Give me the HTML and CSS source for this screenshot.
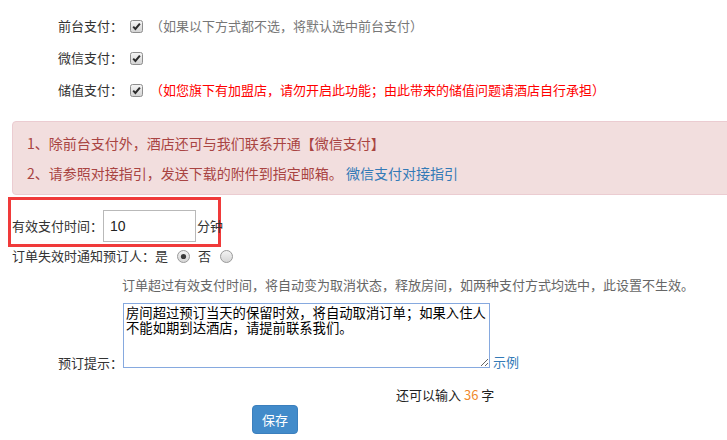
FILE: index.html
```html
<!DOCTYPE html>
<html lang="zh-CN">
<head>
<meta charset="utf-8">
<title>支付设置</title>
<link rel="stylesheet" href="styles.css">
</head>
<body>
<div class="page">
  <div class="pay-opts">
    <div class="opt-row">
      <span class="lbl">前台支付：</span>
      <svg class="cb" width="13" height="13" viewBox="0 0 13 13"><defs><linearGradient id="cbg1" x1="0" y1="0" x2="0" y2="1"><stop offset="0" stop-color="#f6f6f6"/><stop offset="1" stop-color="#d2d2d2"/></linearGradient></defs><rect x="0.5" y="0.5" width="12" height="12" rx="2" fill="url(#cbg1)" stroke="#8e8e8e"/><path d="M3.2 6.6 L5.4 8.9 L9.9 3.6" fill="none" stroke="#2b2b2b" stroke-width="2"/></svg>
      <span class="hint">（如果以下方式都不选，将默认选中前台支付）</span>
    </div>
    <div class="opt-row">
      <span class="lbl">微信支付：</span>
      <svg class="cb" width="13" height="13" viewBox="0 0 13 13"><defs><linearGradient id="cbg2" x1="0" y1="0" x2="0" y2="1"><stop offset="0" stop-color="#f6f6f6"/><stop offset="1" stop-color="#d2d2d2"/></linearGradient></defs><rect x="0.5" y="0.5" width="12" height="12" rx="2" fill="url(#cbg2)" stroke="#8e8e8e"/><path d="M3.2 6.6 L5.4 8.9 L9.9 3.6" fill="none" stroke="#2b2b2b" stroke-width="2"/></svg>
    </div>
    <div class="opt-row">
      <span class="lbl">储值支付：</span>
      <svg class="cb" width="13" height="13" viewBox="0 0 13 13"><defs><linearGradient id="cbg3" x1="0" y1="0" x2="0" y2="1"><stop offset="0" stop-color="#f6f6f6"/><stop offset="1" stop-color="#d2d2d2"/></linearGradient></defs><rect x="0.5" y="0.5" width="12" height="12" rx="2" fill="url(#cbg3)" stroke="#8e8e8e"/><path d="M3.2 6.6 L5.4 8.9 L9.9 3.6" fill="none" stroke="#2b2b2b" stroke-width="2"/></svg>
      <span class="warn">（如您旗下有加盟店，请勿开启此功能；由此带来的储值问题请酒店自行承担）</span>
    </div>
  </div>

  <div class="alert">
    <p>1、除前台支付外，酒店还可与我们联系开通【微信支付】</p>
    <p>2、请参照对接指引，发送下载的附件到指定邮箱。 <a class="alert-link" href="#">微信支付对接指引</a></p>
  </div>

  <div class="pay-time">
    <span class="pt-lbl">有效支付时间：</span><input class="pt-input" type="text" value="10"><span class="pt-unit">分钟</span>
  </div>

  <div class="notify">
    <span>订单失效时通知预订人：是</span>
    <svg class="radio r1" width="13" height="13" viewBox="0 0 13 13"><defs><linearGradient id="rg1" x1="0" y1="0" x2="0" y2="1"><stop offset="0" stop-color="#f4f4f4"/><stop offset="1" stop-color="#d4d4d4"/></linearGradient></defs><circle cx="6.5" cy="6.5" r="6" fill="url(#rg1)" stroke="#9a9a9a"/><circle cx="6.5" cy="6.5" r="2.6" fill="#3a3a3a"/></svg>
    <span class="no">否</span>
    <svg class="radio r2" width="13" height="13" viewBox="0 0 13 13"><defs><linearGradient id="rg2" x1="0" y1="0" x2="0" y2="1"><stop offset="0" stop-color="#f4f4f4"/><stop offset="1" stop-color="#d4d4d4"/></linearGradient></defs><circle cx="6.5" cy="6.5" r="6" fill="url(#rg2)" stroke="#9a9a9a"/></svg>
  </div>

  <p class="note">订单超过有效支付时间，将自动变为取消状态，释放房间，如两种支付方式均选中，此设置不生效。</p>

  <div class="tip-row">
    <span class="tip-lbl">预订提示：</span>
    <textarea class="tip-text">房间超过预订当天的保留时效，将自动取消订单；如果入住人
不能如期到达酒店，请提前联系我们。</textarea>
    <a class="example" href="#">示例</a>
  </div>

  <div class="counter">还可以输入 <span class="num">36</span> 字</div>

  <div class="actions">
    <button class="btn-save" type="button">保存</button>
  </div>
</div>
</body>
</html>
```

FILE: styles.css
```css
html, body {
  margin: 0;
  padding: 0;
  overflow: hidden;
  background: #fff;
}

body {
  font-family: "Microsoft YaHei", "Noto Sans CJK SC", sans-serif;
  font-size: 13px;
  color: #333;
}

.page {
  padding-top: 10px;
}

.pay-opts {
  padding-left: 58px;
}

.opt-row {
  height: 32px;
  display: flex;
  align-items: center;
  line-height: 18px;
  white-space: nowrap;
}

.lbl {
  width: 65px;
}

.cb {
  display: block;
  margin: 0 7px;
  flex: none;
}

.hint {
  color: #777;
}

.warn {
  color: #ff0000;
}

.alert {
  margin: 15px -8px 0 12px;
  padding: 6px 14px;
  background: #f2dede;
  border: 1px solid #ebccd1;
  border-radius: 4px;
  color: #a94442;
  font-size: 14px;
  line-height: 30px;
}

.alert p {
  margin: 0;
  white-space: nowrap;
}

.alert-link {
  color: #337ab7;
  text-decoration: none;
}

.pay-time {
  box-sizing: border-box;
  width: 213px;
  height: 50px;
  margin: 2px 0 0 8px;
  padding: 10px 0 2px 1px;
  border: 3px solid #f03a3a;
  display: flex;
  align-items: center;
  white-space: nowrap;
  line-height: 18px;
}

.pt-lbl {
  flex: none;
}

.pt-input {
  box-sizing: border-box;
  flex: none;
  width: 93px;
  height: 32px;
  margin: 0;
  padding: 0 6px;
  border: 1px solid #b9b9b9;
  font-family: "Liberation Sans", "Noto Sans CJK SC", sans-serif;
  font-size: 14px;
  color: #222;
  outline: none;
}

.pt-unit {
  margin-left: 1px;
  flex: none;
}

.notify {
  height: 18px;
  line-height: 18px;
  display: flex;
  align-items: center;
  padding-left: 12px;
  white-space: nowrap;
}

.radio {
  display: block;
  flex: none;
}

.r1 {
  margin-left: 9px;
}

.no {
  margin-left: 8px;
}

.r2 {
  margin-left: 9px;
}

.note {
  margin: 11px 0 0 122px;
  line-height: 18px;
  color: #666;
  white-space: nowrap;
}

.tip-row {
  margin-top: 9px;
  padding-left: 58px;
  display: flex;
  align-items: flex-end;
  line-height: 18px;
}

.tip-lbl {
  width: 65px;
  flex: none;
  margin-bottom: -4px;
}

.tip-text {
  box-sizing: border-box;
  flex: none;
  width: 367px;
  height: 65px;
  margin: 0;
  padding: 2px;
  border: 1px solid #86a9df;
  font-family: "Noto Sans CJK SC", sans-serif;
  font-size: 13.333px;
  line-height: 14.5px;
  color: #000;
  white-space: pre;
  overflow: hidden;
  outline: none;
}

.example {
  margin-left: 3px;
  margin-bottom: -3px;
  color: #337ab7;
  text-decoration: none;
}

.counter {
  margin-top: 18px;
  padding-left: 396px;
  line-height: 18px;
  color: #222;
}

.num {
  color: #f0892e;
}

.actions {
  margin-top: 1px;
  padding-left: 252px;
}

.btn-save {
  box-sizing: border-box;
  width: 46px;
  height: 29px;
  padding: 0;
  background: #428bca;
  border: 1px solid #3b7fbd;
  border-radius: 4px;
  color: #fff;
  font-family: "Microsoft YaHei", "Noto Sans CJK SC", sans-serif;
  font-size: 13px;
  line-height: 27px;
}
```
